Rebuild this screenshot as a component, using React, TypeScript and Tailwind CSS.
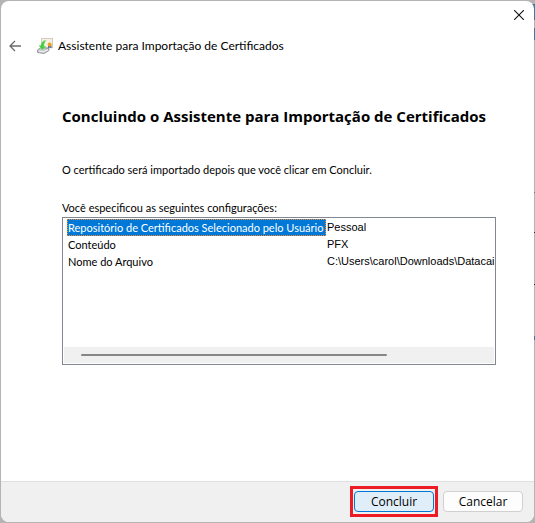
import React from "react";

const settings = [
  { name: "Repositório de Certificados Selecionado pelo Usuário", value: "Pessoal" },
  { name: "Conteúdo", value: "PFX" },
  { name: "Nome do Arquivo", value: "C:\\Users\\carol\\Downloads\\Datacai" },
];

export default function App() {
  return (
    <div className="relative min-h-screen flex flex-col bg-[#b4b4b4] p-px text-black">
      {/* Desktop showing behind the window edge */}
      <div className="absolute right-0 top-1 w-2 h-4 bg-[#3b7ba3]" />
      <div className="absolute right-0 top-7 w-1 h-3 bg-[#3b7ba3]" />
      <div className="absolute right-0 top-48 w-1 h-px bg-[#777]" />
      <div className="absolute right-0 top-58 w-1 h-px bg-[#333]" />
      <div className="absolute right-0 top-71 w-1 h-px bg-[#333]" />
      <div className="absolute right-0 top-84 w-1 h-1 bg-[#3b7ba3]" />

      <main className="relative flex-1 flex flex-col bg-white rounded-lg overflow-hidden">
        <header className="flex flex-col">
          <div className="flex justify-end px-[5px] pt-1">
            <button type="button" aria-label="Fechar" className="w-5 h-5 flex items-center justify-center">
              <CloseIcon />
            </button>
          </div>
          <div className="flex items-center px-2 pt-2">
            <button type="button" aria-label="Voltar" className="mr-4">
              <BackIcon />
            </button>
            <CertificateIcon />
            <h1 className="ml-[5px] pt-px text-[12px] leading-6 font-['Lato','Open_Sans',sans-serif]">
              Assistente para Importação de Certificados
            </h1>
          </div>
        </header>

        <section className="flex-1 flex flex-col pl-[61px] pr-[38px] pt-[46px] text-[11px] leading-4 font-['Lato','Open_Sans',sans-serif]">
          <h2 className="text-[15px] leading-6 font-bold whitespace-nowrap font-['Open_Sans','Noto_Sans',sans-serif]">
            Concluindo o Assistente para Importação de Certificados
          </h2>
          <p className="mt-[34px]">O certificado será importado depois que você clicar em Concluir.</p>
          <p id="settings-label" className="mt-[22px]">Você especificou as seguintes configurações:</p>
          <SettingsList />
        </section>

        <footer className="flex justify-end items-center gap-[5px] bg-[#f0f0f0] border-t border-[#dfdfdf] pl-2 pr-[11px] pt-1 pb-[5px] text-[12px] leading-4 font-['Open_Sans','Noto_Sans',sans-serif]">
          <div className="border-3 border-[#ed1c24] px-px py-0.5">
            <button type="button" className="block w-20 h-[21px] rounded border border-[#0078d4] bg-[#e0eef9]">
              Concluir
            </button>
          </div>
          <button type="button" className="w-20 h-[21px] rounded border border-[#d0d0d0] bg-[#fdfdfd]">
            Cancelar
          </button>
        </footer>
      </main>
    </div>
  );
}

function SettingsList() {
  return (
    <div className="mt-px h-37 flex flex-col justify-between border border-[#828790]">
      <table aria-labelledby="settings-label" className="w-full table-fixed mt-px">
        <tbody>
          {settings.map((row, i) => (
            <tr key={row.name} className="h-[17px] leading-[17px] whitespace-nowrap">
              <td className="w-[263px] p-0 pl-1">
                <span className={i === 0 ? "block pl-px bg-[#0078d7] text-white outline-dotted outline-1 -outline-offset-1 outline-[#ff8728]" : "block pl-px"}>
                  {row.name}
                </span>
              </td>
              <td className="p-0 pl-px font-['Liberation_Sans',sans-serif]">{row.value}</td>
            </tr>
          ))}
        </tbody>
      </table>
      <div className="m-px h-4 flex items-center bg-[#f0f0f0] pl-[17px] pr-4">
        <div className="w-[77%] h-0.5 rounded-full bg-[#868686]" />
      </div>
    </div>
  );
}

function CloseIcon() {
  return (
    <svg width="10" height="10" viewBox="0 0 10 10" fill="none" stroke="#111" strokeWidth="1.1">
      <path d="M0 0L10 10M10 0L0 10" />
    </svg>
  );
}

function BackIcon() {
  return (
    <svg width="12" height="12" viewBox="0 0 12 12" fill="none" stroke="#6b6b6b" strokeWidth="1.3">
      <path d="M12 6H1M6 1L1 6L6 11" />
    </svg>
  );
}

function CertificateIcon() {
  return (
    <svg width="16" height="16" viewBox="0 0 16 16">
      <rect x="4.5" y="0.5" width="11" height="9" fill="#f6f0e4" stroke="#d3cbbd" />
      <path d="M0.5 12L4 9.5L12 10.5V12.5L7 15.5L0.5 14.5Z" fill="#c9cbce" stroke="#85888c" strokeWidth="0.8" />
      <path d="M2 13.2L6.500 13.800L11 11.800" fill="none" stroke="#f4f4f4" />
      <path d="M9 2.500C6 2.500 4 4.500 3.800 7.500H2L5 12L9 8.500H7C6.800 6 7.500 4 9 2.500Z" fill="#45cb3f" stroke="#8be082" strokeWidth="0.5" />
      <path d="M11 7.500V10.500L12.500 9.500L14.500 10.500V7.500Z" fill="#5a7396" />
      <circle cx="12.700" cy="6.500" r="2" fill="#eca120" />
    </svg>
  );
}
